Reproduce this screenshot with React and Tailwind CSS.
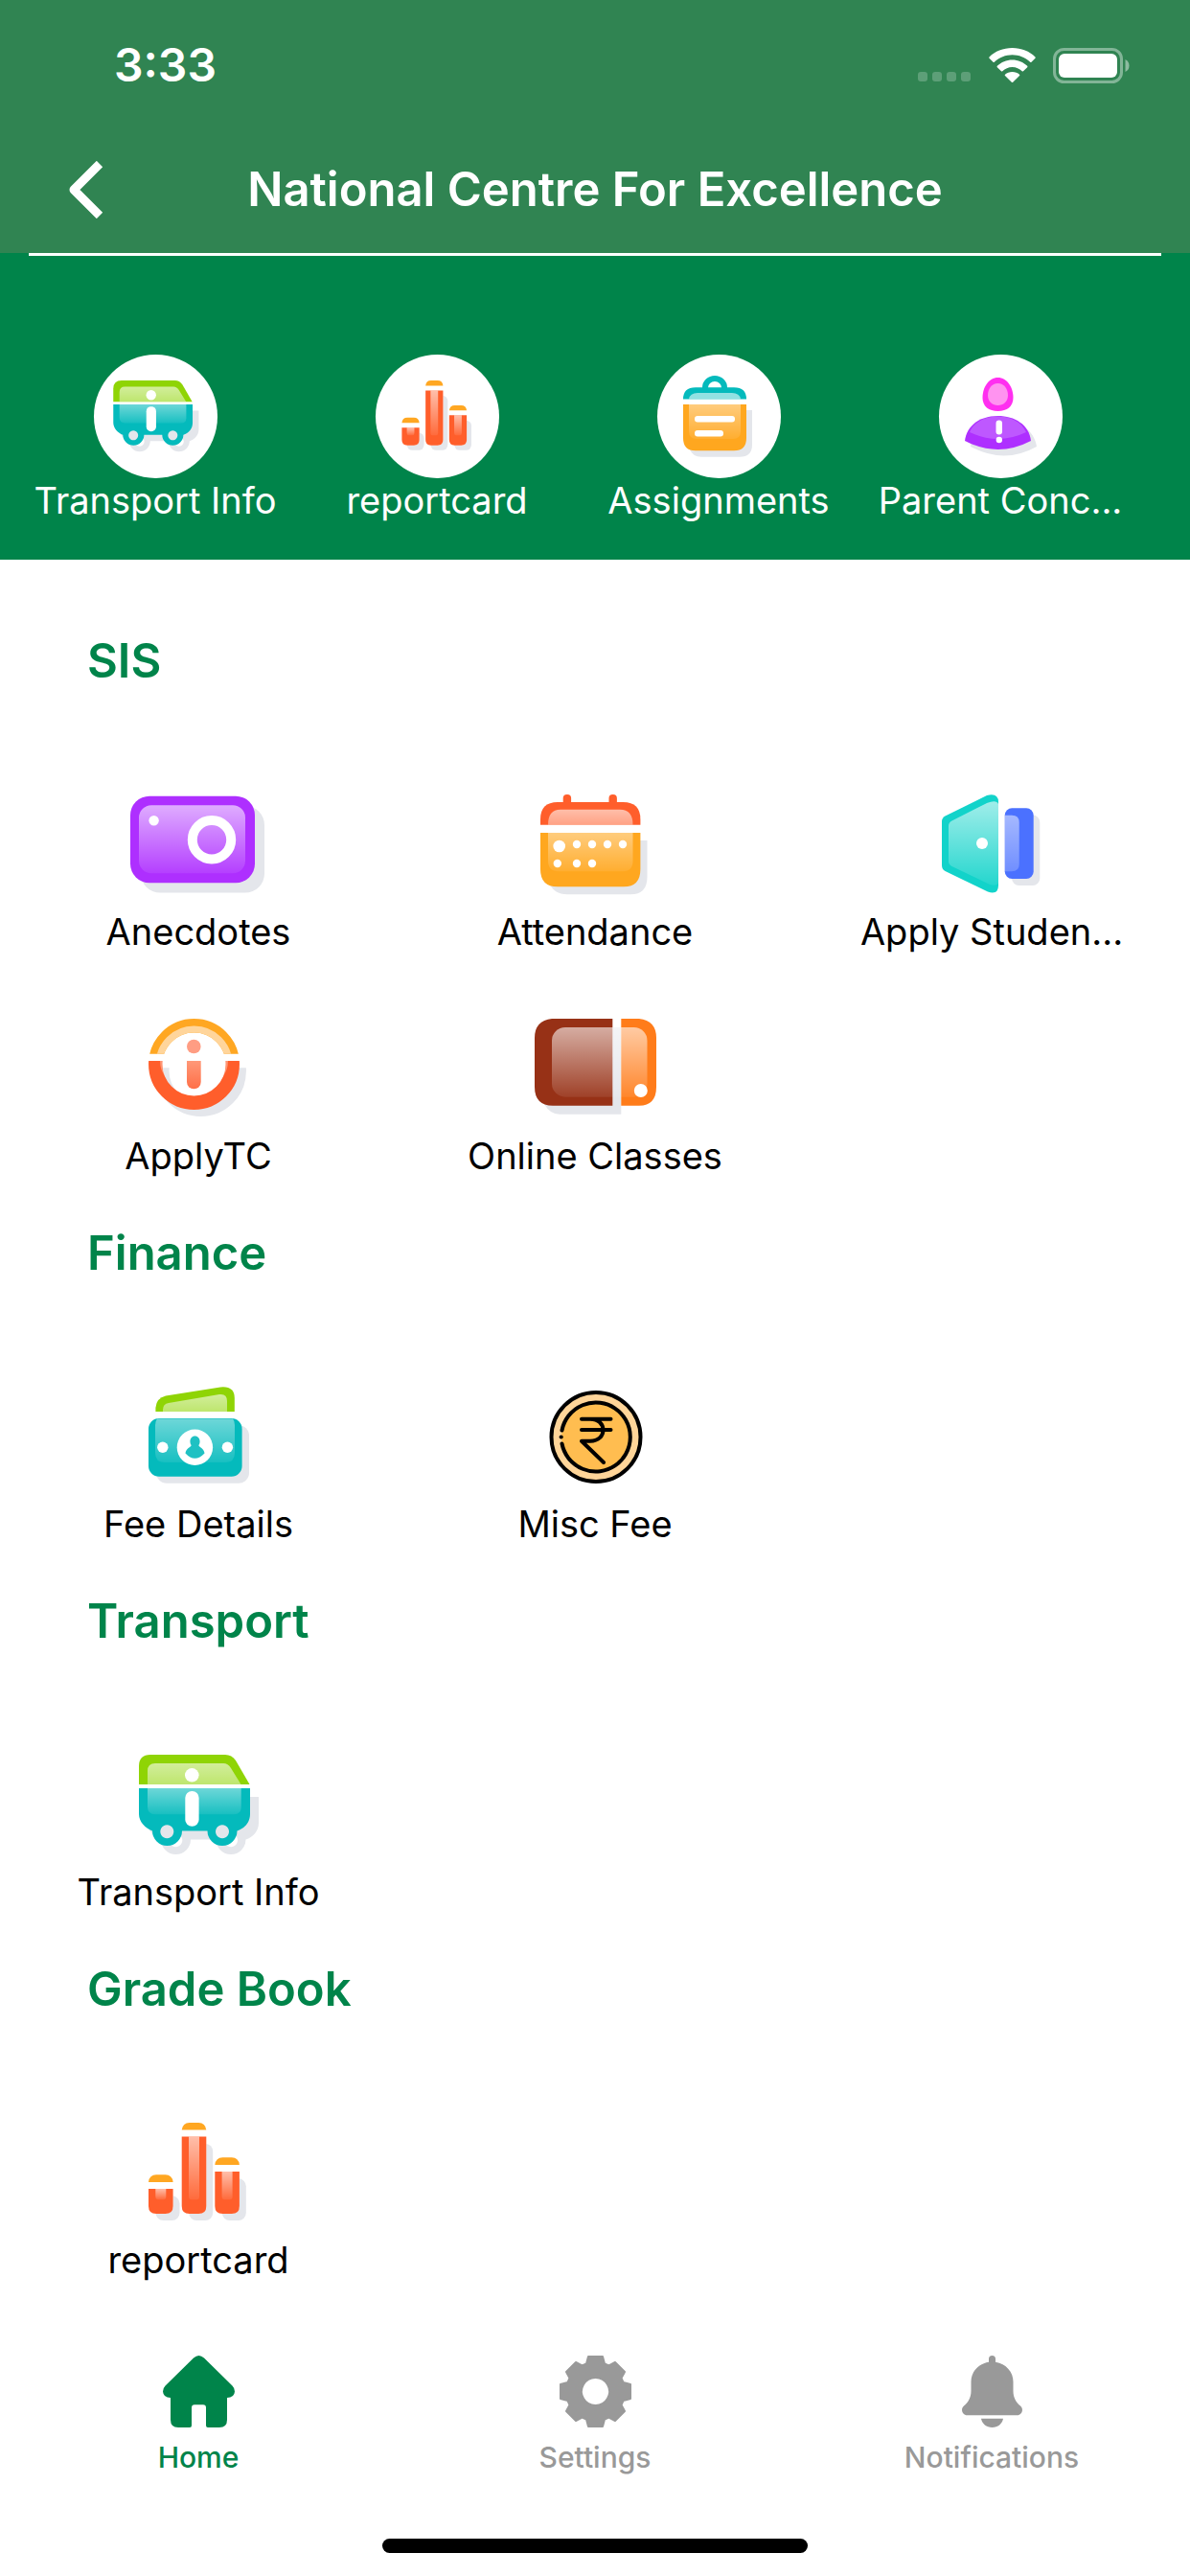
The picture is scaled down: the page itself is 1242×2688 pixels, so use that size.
import React, { useState } from "react";

const SHADOW = "#e4e6eb";

// Gradients shared by all the menu icons
const IconGradients = () => (
  <svg className="absolute w-0 h-0" aria-hidden="true">
    <defs>
      <linearGradient id="gloss" x1="0" y1="0" x2="0" y2="1">
        <stop offset="0" stopColor="#fff" stopOpacity="0.6" />
        <stop offset="1" stopColor="#fff" stopOpacity="0.08" />
      </linearGradient>
      <linearGradient id="glossTop" x1="0" y1="0" x2="0" y2="1">
        <stop offset="0" stopColor="#fff" stopOpacity="0.6" />
        <stop offset="1" stopColor="#fff" stopOpacity="0.42" />
      </linearGradient>
      <linearGradient id="glossLow" x1="0" y1="0" x2="0" y2="1">
        <stop offset="0" stopColor="#fff" stopOpacity="0.42" />
        <stop offset="1" stopColor="#fff" stopOpacity="0.08" />
      </linearGradient>
      <linearGradient id="infoBar" x1="0" y1="0" x2="0" y2="1">
        <stop offset="0" stopColor="#ff9878" />
        <stop offset="1" stopColor="#ff6f47" />
      </linearGradient>
    </defs>
  </svg>
);

const TileSvg = ({ className, children }) => (
  <svg viewBox="0 0 150 105" className={className} aria-hidden="true">
    {children}
  </svg>
);

const BUS_BODY =
  "M13 35H129V62C129 71 123 77 115.5 79.5A15.5 15.5 0 1 1 84.5 79.5H58A15.5 15.5 0 1 1 27 79.5C20 77 13 70 13 62ZM42.3 73.3a7 7 0 1 0 .01 0ZM100 73.3a7 7 0 1 0 .01 0Z";

const BusIcon = ({ className }) => (
  <TileSvg className={className}>
    <path d={BUS_BODY} transform="translate(9 9)" fill={SHADOW} fillRule="evenodd" />
    <circle cx="42.3" cy="80.3" r="8" fill={SHADOW} />
    <circle cx="100" cy="80.3" r="8" fill={SHADOW} />
    <path d="M13 31V12Q13 0 25 0H103Q110 0 114 6L128.5 31Z" fill="#8fd405" />
    <path d="M22 31V17Q22 9 30 9H101Q106 9 109 14L119.5 31Z" fill="url(#glossTop)" />
    <path d={BUS_BODY} fill="#04babc" fillRule="evenodd" />
    <path d="M22 35H119.700V55Q119.700 62.300 112 62.300H30Q22 62.300 22 54Z" fill="url(#glossLow)" />
    <circle cx="68.3" cy="21.3" r="7.3" fill="#fff" />
    <rect x="61.3" y="38" width="14.300" height="36.700" rx="7" fill="#fff" />
  </TileSvg>
);

const reportBars = [
  { x: 23, top: 54.3 },
  { x: 57.7, top: 0 },
  { x: 92.3, top: 36.3 },
];

const ReportIcon = ({ className }) => (
  <TileSvg className={className}>
    {reportBars.map(({ x, top }) => (
      <rect key={x} x={x + 7.5} y={top + 22} width="25" height={80 - top} rx="8" fill={SHADOW} />
    ))}
    {reportBars.map(({ x, top }) => (
      <g key={x}>
        <rect x={x} y={top} width="25.6" height={95 - top} rx="8" fill="#fff" />
        <path d={`M${x} ${top + 7.6}Q${x + 1} ${top} ${x + 8} ${top}h9.600q7 0 8 7.600Z`} fill="#ffa722" />
        <path
          d={`M${x} ${top + 14.6}h25.600V87q0 8 -8 8h-9.600q-8 0 -8 -8Z`}
          fill="#ff5e2b"
        />
        <path d={`M${x + 7.3} ${top + 14.6}h11V77q0 3.300 -3 3.300h-5q-3 0 -3 -3.300Z`} fill="url(#gloss)" />
      </g>
    ))}
  </TileSvg>
);

const ClipboardIcon = ({ className }) => (
  <svg viewBox="0 0 129 129" className={className} aria-hidden="true">
    <path d="M33 58H99V94Q99 106.700 86 106.700H46Q37 106.700 34 99Z" fill={SHADOW} />
    <path d="M50 38V34.500A10 9.500 0 0 1 70 34.500V38" fill="none" stroke="#04babc" strokeWidth="6" />
    <path d="M27 46.500Q27 34.300 40 34.300H80Q93 34.300 93 46.500Z" fill="#04babc" />
    <path d="M33 46.500Q34 40 42 40H78Q86 40 87 46.500Z" fill="#fff" fillOpacity="0.57" />
    <path d="M27 52H93V87Q93 100.300 80 100.300H40Q27 100.300 27 87Z" fill="#ffa71f" />
    <path d="M33 52H87V80Q87 88 79 88H41Q33 88 33 80Z" fill="url(#glossLow)" />
    <rect x="39" y="64" width="42" height="6.500" rx="3" fill="#fff" />
    <rect x="39" y="79" width="30" height="6.500" rx="3" fill="#fff" />
  </svg>
);

const PersonIcon = ({ className }) => (
  <svg viewBox="0 0 129 129" className={className} aria-hidden="true">
    <path d="M33 96C36 78 50 70 67 70S99 78 102 96Q68 115 33 96Z" fill={SHADOW} />
    <path d="M61.500 24C71 24 77.500 34 77.500 45C77.500 54 71 59 61.500 59S45.500 54 45.500 45C45.500 34 52 24 61.500 24Z" fill="#ff2ff0" />
    <path d="M61.500 30C68 30 72 36 72 42.500C72 49 67 53 61.500 53S51 49 51 42.500C51 36 55 30 61.500 30Z" fill="#ff93f0" />
    <path d="M27 90C29 73 44 64 61.500 64S94 73 96 90Q61.500 108 27 90Z" fill="#ae2fff" />
    <path d="M32 81C37 70 48 64.500 61.500 64.500S86 70 91 81Q61.500 95 32 81Z" fill="#fff" fillOpacity="0.2" />
    <rect x="59.500" y="68.500" width="6.500" height="15" rx="3.200" fill="#fff" />
    <circle cx="62.800" cy="89" r="3.200" fill="#fff" />
  </svg>
);

const CameraIcon = ({ className }) => (
  <TileSvg className={className}>
    <rect x="15" y="12" width="129" height="90.500" rx="20" fill={SHADOW} />
    <rect x="4" y="1.700" width="130" height="90.600" rx="20" fill="#ae2fff" />
    <rect x="13" y="11.300" width="111" height="71" rx="13" fill="url(#gloss)" />
    <circle cx="28.600" cy="27.300" r="5.200" fill="#fff" />
    <circle cx="89" cy="47.300" r="20.200" fill="none" stroke="#fff" strokeWidth="10" />
  </TileSvg>
);

const calendarDots = [
  [56, 52],
  [72, 52],
  [88, 52],
  [104, 52],
  [35.8, 72],
  [56, 72],
  [72, 72],
];

const CalendarIcon = ({ className }) => (
  <TileSvg className={className}>
    <path d="M30 48H129.500V86Q129.500 104.300 112 104.300H46Q32 104.300 27 92Z" fill={SHADOW} />
    <rect x="41.700" y="0" width="8.400" height="16" rx="4" fill="#ff5e2b" />
    <rect x="89.500" y="0" width="8.400" height="16" rx="4" fill="#ff5e2b" />
    <path d="M18 31.700V26Q18 8 36 8H104.400Q122.400 8 122.400 26V31.700Z" fill="#ff5e2b" />
    <path d="M26 31.700Q26 15.700 39 15.700H101Q114.500 15.700 114.500 31.700Z" fill="url(#glossTop)" />
    <path d="M18 40H122.400V78Q122.400 96.300 105 96.300H36Q18 96.300 18 78Z" fill="#ffa71f" />
    <path d="M26 40H114.500V69Q114.500 80.300 104 80.300H37Q26 80.300 26 69Z" fill="url(#glossLow)" />
    <circle cx="37.700" cy="54" r="6.300" fill="#fff" />
    {calendarDots.map(([cx, cy]) => (
      <circle key={`${cx}-${cy}`} cx={cx} cy={cy} r="4.200" fill="#fff" />
    ))}
  </TileSvg>
);

const DoorIcon = ({ className }) => (
  <TileSvg className={className}>
    <rect x="96" y="21.500" width="29.300" height="73.500" rx="7.500" fill={SHADOW} />
    <path d="M23 28Q23 24.500 26.500 22.500L70 1Q82 -2 82 8V95Q82 105 71 101.500L26.500 80Q23 78 23 74Z" fill="#12d3ca" />
    <path d="M30 33Q30 29 33.500 27.500L70 9Q80 5 82 10V92Q81 96 73 94L33.500 75Q30 73 30 70Z" fill="url(#gloss)" />
    <circle cx="65" cy="51" r="6" fill="#fff" />
    <rect x="88.700" y="14.300" width="30" height="73.700" rx="7.500" fill="#4b71ff" />
    <path d="M88.700 21.700H96Q103.700 21.700 103.700 29V73Q103.700 80.300 96 80.300H88.700Z" fill="#fff" fillOpacity="0.14" />
    <path d="M88.700 21.700H96Q103.700 21.700 103.700 29V73Q103.700 80.300 96 80.300H88.700Z" fill="url(#glossLow)" />
  </TileSvg>
);

const InfoIcon = ({ className }) => (
  <TileSvg className={className}>
    <clipPath id="infoShadow">
      <rect x="20" y="51.300" width="120" height="54" />
    </clipPath>
    <clipPath id="infoTop">
      <rect x="20" y="0" width="120" height="36.700" />
    </clipPath>
    <clipPath id="infoBottom">
      <rect x="20" y="44" width="120" height="60" />
    </clipPath>
    <circle cx="77.500" cy="54.500" r="40.200" fill="none" stroke={SHADOW} strokeWidth="14.500" clipPath="url(#infoShadow)" />
    <g clipPath="url(#infoTop)">
      <circle cx="70.500" cy="47.500" r="40.200" fill="none" stroke="#ffa722" strokeWidth="14.500" />
      <circle cx="70.500" cy="47.500" r="36.500" fill="none" stroke="#ffd59b" strokeWidth="7" />
    </g>
    <g clipPath="url(#infoBottom)">
      <circle cx="70.500" cy="47.500" r="40.200" fill="none" stroke="#ff5e2b" strokeWidth="14.500" />
      <path d="M35 44H38Q38 54 41 61Q35 54 35 44ZM106 44H103Q103 54 100 61Q106 54 106 44Z" fill="#fff" fillOpacity="0.35" />
    </g>
    <circle cx="70.300" cy="29" r="7.300" fill="#ff9d83" />
    <path d="M63 44H77.700V66A7.350 7.350 0 0 1 63 66Z" fill="url(#infoBar)" />
  </TileSvg>
);

const TabletIcon = ({ className }) => (
  <TileSvg className={className}>
    <path d="M21 40H102.300V99.700H38Q28 99.700 22 89Z" fill={SHADOW} />
    <rect x="93.300" y="9" width="9" height="50" fill={SHADOW} />
    <path d="M93.300 0H30Q12 2 12 20V71Q12 90.700 31 90.700H93.300Z" fill="#973116" />
    <path d="M102.300 0H121Q139 2 139 20V71Q139 90.700 121 90.700H102.300Z" fill="#ff7c1a" />
    <rect x="30" y="9" width="99.500" height="72.700" rx="14" fill="url(#gloss)" />
    <circle cx="122.800" cy="75" r="7" fill="#fff" />
  </TileSvg>
);

const MoneyIcon = ({ className }) => (
  <TileSvg className={className}>
    <rect x="31" y="40" width="97" height="60.700" rx="11" fill={SHADOW} />
    <path d="M30.400 26V22Q31 12 41 9.500L98 .5Q112.800 -1 112.800 12V26Z" fill="#8fd405" />
    <path d="M38 26V24Q38 18 44 17L97 8Q105 7 105 15V26Z" fill="url(#glossTop)" />
    <rect x="23" y="33" width="97.600" height="60.700" rx="11" fill="#04babc" />
    <path d="M32 33.500H111Q113 36 113 40V69Q113 79 103 79H40Q30 79 30 69V40Q30 36 32 33.500Z" fill="url(#glossLow)" />
    <circle cx="71.400" cy="63.300" r="18.700" fill="#fff" />
    <path d="M71.400 51.500C76 51.500 78 57 75.500 61C75 63 81 64 81.500 69.500Q71.400 80 61.500 69.500C62 64 68 63 67.500 61C65 57 67 51.500 71.400 51.500Z" fill="#1fc1c3" />
    <circle cx="37.800" cy="63.300" r="5.700" fill="#fff" />
    <circle cx="105.400" cy="63.300" r="5.700" fill="#fff" />
  </TileSvg>
);

const CoinIcon = ({ className }) => (
  <TileSvg className={className}>
    <circle cx="76" cy="52.500" r="46.500" fill="#ffd599" stroke="#000" strokeWidth="4" />
    <circle cx="76" cy="52.500" r="36" fill="#ffbd50" />
    <path d="M40.500 45.500A36 36 0 1 1 40.500 59.500" fill="none" stroke="#000" strokeWidth="4" strokeLinecap="round" />
    <circle cx="39.700" cy="52.500" r="2.100" fill="#000" />
    <path
      d="M61 33.700H91.500M61 45H91.500M70 33.700C88 33.700 88 56.700 70 56.700H61L84 79"
      fill="none"
      stroke="#000"
      strokeWidth="4"
      strokeLinecap="round"
      strokeLinejoin="round"
    />
  </TileSvg>
);

const HomeIcon = () => (
  <svg viewBox="0 0 75 75" className="w-[75px] h-[75px]" fill="currentColor" aria-hidden="true">
    <path d="M32 2.500Q37.500 -2.500 43 2.500L72.500 31.500Q75 34 75 37.500Q74.500 44 67 44V67Q67 75 59 75H47Q45 75 45 73V54.500Q45 51.300 42 51.300H33Q30 51.300 30 54.500V73Q30 75 28 75H16Q8 75 8 67V44Q.5 44 0 37.500Q0 34 2.500 31.500Z" />
  </svg>
);

const SettingsIcon = () => (
  <svg viewBox="0 0 75 75" className="w-[75px] h-[75px]" fill="currentColor" aria-hidden="true">
    <path
      fillRule="evenodd"
      stroke="currentColor"
      strokeWidth="2"
      strokeLinejoin="round"
      d="M30 1H45L47 8.500L51.500 10.500L58 7L68 17L64.500 23.500L66.500 28L74 30V45L66.500 47L64.500 51.500L68 58L58 68L51.500 64.500L47 66.500L45 74H30L28 66.500L23.500 64.500L17 68L7 58L10.500 51.500L8.500 47L1 45V30L8.500 28L10.500 23.500L7 17L17 7L23.500 10.500L28 8.500ZM37.500 23A14.500 14.500 0 1 0 37.510 23Z"
    />
  </svg>
);

const BellIcon = () => (
  <svg viewBox="0 0 63 75" className="w-[63px] h-[75px]" fill="currentColor" aria-hidden="true">
    <path d="M28 6.700V3.500A3.500 3.500 0 0 1 35 3.500V6.700C46 8.500 53.500 17 53.500 27.500V37C53.500 43 56 48.500 61 52.500C65 56 62.500 62.300 57.500 62.300H5.500C.5 62.300 -2 56 2 52.500C7 48.500 9.500 43 9.500 37V27.500C9.500 17 17 8.500 28 6.700Z" />
    <path d="M20 65.700H43C42 71 37.500 75 31.500 75S21 71 20 65.700Z" />
  </svg>
);

const StatusIcons = () => (
  <div className="flex items-center text-white">
    <svg viewBox="0 0 55 37" className="w-[55px] h-[37px] mr-[19px]" aria-hidden="true">
      {[0, 15, 30, 45].map((x) => (
        <rect key={x} x={x} y="25" width="10" height="10" rx="3" fill="#fff" fillOpacity="0.22" />
      ))}
    </svg>
    <svg viewBox="0 0 49 37" className="w-[49px] h-[37px] mr-[18px]" fill="currentColor" aria-hidden="true">
      <path d="M24.500 0C34 0 42.500 3.500 48.500 9.500Q49 10.200 48.500 10.800L44.500 14.800Q43.800 15.300 43.200 14.800C38 10 31.500 7.300 24.500 7.300S11 10 5.800 14.800Q5.200 15.300 4.500 14.800L.5 10.800Q0 10.200 .5 9.500C6.500 3.500 15 0 24.500 0Z" />
      <path d="M24.500 12.500C30.500 12.500 36 14.800 40.200 18.800Q40.800 19.500 40.200 20.200L36 24.300Q35.300 24.900 34.700 24.300C32 21.700 28.500 20 24.500 20S17 21.700 14.300 24.300Q13.700 24.900 13 24.300L8.800 20.200Q8.200 19.500 8.800 18.800C13 14.800 18.500 12.500 24.500 12.500Z" />
      <path d="M24.500 25C27.500 25 30 26 32 27.700Q32.700 28.400 32 29.100L25.200 35.800Q24.500 36.400 23.800 35.800L17 29.100Q16.300 28.400 17 27.700C19 26 21.500 25 24.500 25Z" />
    </svg>
    <svg viewBox="0 0 80 37" className="w-[80px] h-[37px]" aria-hidden="true">
      <rect x="1.500" y="1.500" width="70" height="34" rx="10" fill="none" stroke="#fff" strokeOpacity="0.4" strokeWidth="3" />
      <rect x="6" y="6" width="61" height="25" rx="6" fill="#fff" />
      <path d="M75.500 12V25Q79.500 23 79.500 18.500T75.500 12Z" fill="#fff" fillOpacity="0.45" />
    </svg>
  </div>
);

const quickLinks = [
  { label: "Transport Info", Icon: BusIcon, size: "w-[107px] h-[75px]" },
  { label: "reportcard", Icon: ReportIcon, size: "w-[107px] h-[75px]" },
  { label: "Assignments", Icon: ClipboardIcon, size: "w-full h-full" },
  { label: "Parent Conc...", Icon: PersonIcon, size: "w-full h-full" },
];

const sections = [
  {
    title: "SIS",
    items: [
      { label: "Anecdotes", Icon: CameraIcon },
      { label: "Attendance", Icon: CalendarIcon },
      { label: "Apply Studen...", Icon: DoorIcon },
      { label: "ApplyTC", Icon: InfoIcon },
      { label: "Online Classes", Icon: TabletIcon },
    ],
  },
  {
    title: "Finance",
    items: [
      { label: "Fee Details", Icon: MoneyIcon },
      { label: "Misc Fee", Icon: CoinIcon },
    ],
  },
  { title: "Transport", items: [{ label: "Transport Info", Icon: BusIcon }] },
  { title: "Grade Book", items: [{ label: "reportcard", Icon: ReportIcon }] },
];

const tabs = [
  { id: "home", label: "Home", Icon: HomeIcon },
  { id: "settings", label: "Settings", Icon: SettingsIcon },
  { id: "notifications", label: "Notifications", Icon: BellIcon },
];

const App = () => {
  const [activeTab, setActiveTab] = useState("home");

  return (
    <div className="min-h-screen flex flex-col bg-white font-['Inter',sans-serif]">
      <IconGradients />

      {/* Header */}
      <header className="bg-[#308452] text-white pb-1">
        <div className="h-[136px] flex items-center justify-between pl-[119px] pr-[63px]">
          <span className="text-[48px] leading-[60px] font-semibold">3:33</span>
          <StatusIcons />
        </div>
        <div className="h-[124px] grid grid-cols-[180px_1fr_180px] items-center">
          <button type="button" aria-label="Back" className="pl-[70px]">
            <svg viewBox="0 0 40 60" className="w-10 h-[60px]" fill="none" aria-hidden="true">
              <path d="M34 3L7 30L34 57" stroke="#fff" strokeWidth="9" strokeLinejoin="round" />
            </svg>
          </button>
          <h1 className="text-[49px] leading-[60px] font-semibold text-center whitespace-nowrap">
            National Centre For Excellence
          </h1>
        </div>
      </header>

      {/* Quick links */}
      <section className="bg-[#00844a] text-white pb-[39px]">
        <div className="mx-[30px] h-[3px] bg-white" />
        <div className="grid grid-cols-4 pt-[103px] pl-[15px] pr-[51px]">
          {quickLinks.map(({ label, Icon, size }) => (
            <a key={label} href="#" className="flex flex-col items-center">
              <span className="w-[129px] h-[129px] rounded-full bg-white flex items-center justify-center">
                <Icon className={size} />
              </span>
              <span className="text-[38px] leading-[46px] whitespace-nowrap">{label}</span>
            </a>
          ))}
        </div>
      </section>

      {/* Menu sections */}
      <main className="pt-[76px] flex flex-col gap-[49px]">
        {sections.map(({ title, items }) => (
          <section key={title}>
            <h2 className="pl-[91px] text-[49px] leading-[60px] font-semibold text-[#00844a]">
              {title}
            </h2>
            <div className="grid grid-cols-3 gap-y-[68px] mt-[109px]">
              {items.map(({ label, Icon }) => (
                <a key={label} href="#" className="flex flex-col items-center gap-[15px] text-black">
                  <Icon className="w-[150px] h-[105px]" />
                  <span className="text-[38px] leading-[46px] whitespace-nowrap">{label}</span>
                </a>
              ))}
            </div>
          </section>
        ))}
      </main>

      {/* Tab bar */}
      <footer className="mt-auto pt-7 pb-6">
        <nav className="grid grid-cols-3">
          {tabs.map(({ id, label, Icon }) => (
            <button
              key={id}
              type="button"
              onClick={() => setActiveTab(id)}
              className={`flex flex-col items-center gap-[13px] ${
                activeTab === id ? "text-[#00844a]" : "text-[#999999]"
              }`}
            >
              <Icon />
              <span className="text-[30px] leading-9 font-medium">{label}</span>
            </button>
          ))}
        </nav>
        <div className="mt-[67px] mx-auto w-[444px] h-[15px] rounded-full bg-black" />
      </footer>
    </div>
  );
};

export default App;
